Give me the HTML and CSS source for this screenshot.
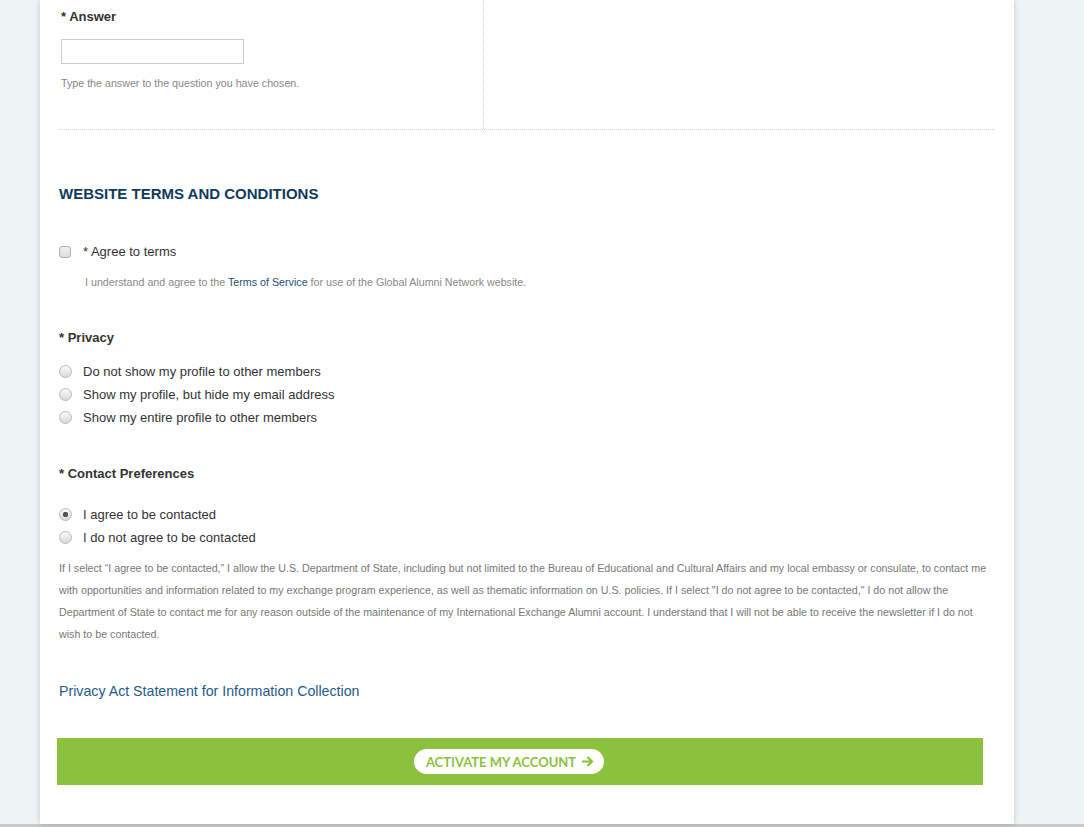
FILE: index.html
```html
<!DOCTYPE html>
<html lang="en">

<head>
    <meta charset="UTF-8">
    <meta name="viewport" content="width=device-width, initial-scale=1.0">
    <title>Activate Account</title>

    <link rel="stylesheet" href="styles.css">

</head>

<body>
    <div class="page">

        <div class="card">

            <div class="question-row">
                <div class="question-col">
                    <label class="field-label" for="answer">* Answer</label>
                    <input type="text" id="answer" class="text-input">
                    <p class="help">Type the answer to the question you have chosen.</p>
                </div>
                <div class="question-col question-col--right"></div>
            </div>

            <h2 class="section-title">WEBSITE TERMS AND CONDITIONS</h2>

            <label class="check-row">
                <input type="checkbox" class="box">
                <span>* Agree to terms</span>
            </label>
            <p class="help help--indent">I understand and agree to the <a href="#">Terms of Service</a> for use of the Global Alumni Network website.</p>

            <div class="field-label group-label">* Privacy</div>
            <div class="options">
                <label class="check-row check-row--radio">
                    <input type="radio" name="privacy" class="dot">
                    <span>Do not show my profile to other members</span>
                </label>
                <label class="check-row check-row--radio">
                    <input type="radio" name="privacy" class="dot">
                    <span>Show my profile, but hide my email address</span>
                </label>
                <label class="check-row check-row--radio">
                    <input type="radio" name="privacy" class="dot">
                    <span>Show my entire profile to other members</span>
                </label>
            </div>

            <div class="field-label group-label group-label--contact">* Contact Preferences</div>
            <div class="options options--contact">
                <label class="check-row check-row--radio">
                    <input type="radio" name="contact" class="dot" checked>
                    <span>I agree to be contacted</span>
                </label>
                <label class="check-row check-row--radio">
                    <input type="radio" name="contact" class="dot">
                    <span>I do not agree to be contacted</span>
                </label>
            </div>

            <p class="disclaimer">If I select “I agree to be contacted,” I allow the U.S. Department of State, including but not limited to the Bureau of Educational and Cultural Affairs and my local embassy or consulate, to contact me with opportunities and information related to my exchange program experience, as well as thematic information on U.S. policies. If I select "I do not agree to be contacted," I do not allow the Department of State to contact me for any reason outside of the maintenance of my International Exchange Alumni account. I understand that I will not be able to receive the newsletter if I do not wish to be contacted.</p>

            <a href="#" class="privacy-link">Privacy Act Statement for Information Collection</a>

            <div class="submit-bar">
                <button type="submit" class="activate-btn">
                    ACTIVATE MY ACCOUNT
                    <svg width="13" height="11" viewBox="0 0 13 11">
                        <path d="M1 5.5H11M6.5 1L11 5.5L6.5 10" fill="none" stroke="#8bc23c" stroke-width="2.2" />
                    </svg>
                </button>
            </div>

        </div>

    </div>
    <div class="scroll-edge"></div>
</body>

</html>
```

FILE: styles.css
```css
* {
    margin: 0;
    padding: 0;
    box-sizing: border-box;
    font-family: "Liberation Sans", Arial, sans-serif;
}

body {
    background: #eef3f6;
    color: #333;
    overflow: hidden;
}

.page {
    display: flex;
    justify-content: flex-start;
    padding-left: 40px;
}

.card {
    width: 974px;
    height: 824px;
    background: #fff;
    box-shadow: 0 0 6px rgba(0, 0, 0, 0.18);
    padding: 0 19px;
    display: flex;
    flex-direction: column;
    align-items: flex-start;
}

/* top question row */
.question-row {
    display: grid;
    grid-template-columns: 425px 1fr;
    width: 936px;
    height: 130px;
    border-bottom: 1px dotted #c9d3da;
}

.question-col {
    display: flex;
    flex-direction: column;
    align-items: flex-start;
    padding: 7px 0 0 2px;
    border-right: 1px dotted #c9d3da;
}

.question-col--right {
    border-right: none;
}

.field-label {
    font-size: 13px;
    line-height: 20px;
    font-weight: bold;
    color: #333;
}

.text-input {
    margin-top: 12px;
    width: 183px;
    height: 25px;
    border: 1px solid #ccc;
    outline: none;
}

.help {
    font-size: 10.7px;
    line-height: 15px;
    color: #888;
    margin-top: 12px;
}

.help a {
    color: #1e4f78;
    text-decoration: none;
}

.help--indent {
    margin-top: 13px;
    padding-left: 26px;
}

.section-title {
    margin-top: 54px;
    font-size: 15px;
    line-height: 20px;
    font-weight: bold;
    color: #0f3a5d;
}

/* checkbox and radio rows */
.check-row {
    display: flex;
    align-items: center;
    font-size: 13px;
    line-height: 20px;
    color: #333;
    margin-top: 38px;
}

.check-row--radio {
    margin-top: 0;
    line-height: 23px;
}

.box,
.dot {
    -webkit-appearance: none;
    appearance: none;
    width: 12px;
    height: 12px;
    margin-right: 12px;
    border: 1px solid #b0b0b0;
    background: linear-gradient(#f0f0f0, #dedede);
}

.box {
    border-radius: 3px;
}

.dot {
    width: 13px;
    height: 13px;
    margin-right: 11px;
    border-radius: 50%;
    border-color: #b8b8b8;
    background: linear-gradient(#fafafa, #d9d9d9);
}

.dot:checked {
    background: radial-gradient(circle, #555 0, #555 2.5px, transparent 3px), linear-gradient(#fafafa, #d9d9d9);
}

.group-label {
    margin-top: 38px;
}

.options {
    margin-top: 12px;
    display: flex;
    flex-direction: column;
}

.group-label--contact {
    margin-top: 35px;
}

.options--contact {
    margin-top: 19px;
}

.disclaimer {
    margin-top: 8px;
    font-size: 10.7px;
    line-height: 22px;
    color: #777;
    width: 936px;
}

.privacy-link {
    margin-top: 36px;
    font-size: 14.2px;
    line-height: 20px;
    color: #1f5b8a;
    text-decoration: none;
}

/* submit */
.submit-bar {
    margin-top: 37px;
    margin-left: -2px;
    width: 926px;
    height: 47px;
    background: #8bc13c;
    display: flex;
    align-items: center;
    justify-content: center;
    padding-right: 22px;
}

.activate-btn {
    display: flex;
    align-items: center;
    gap: 5px;
    height: 25px;
    padding: 0 10px 0 12px;
    border: none;
    border-radius: 13px;
    background: #fff;
    color: #8bc23c;
    font-family: Lato, "Open Sans", sans-serif;
    font-weight: bold;
    font-size: 13px;
    cursor: pointer;
}

.scroll-edge {
    height: 3px;
    background: #cacaca;
}
```
